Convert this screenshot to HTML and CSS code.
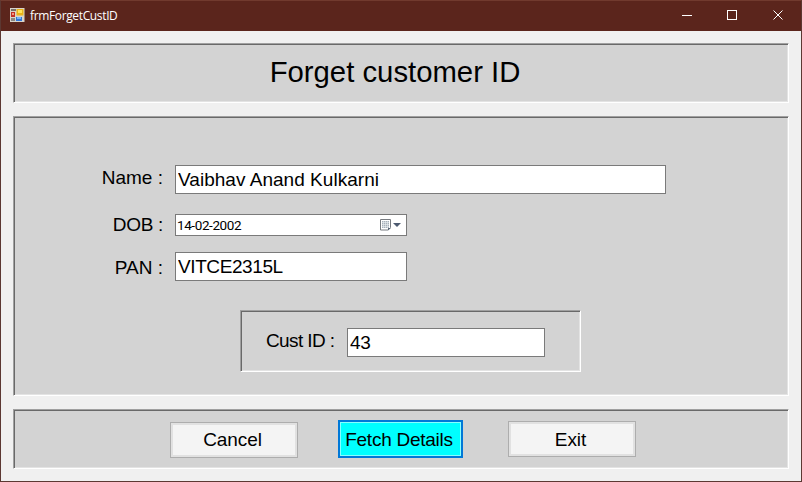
FILE: index.html
```html
<!DOCTYPE html>
<html lang="en">
<head>
<meta charset="utf-8">
<title>frmForgetCustID</title>
<link rel="stylesheet" href="styles.css">
</head>
<body>
<div class="window">
  <header class="titlebar">
    <svg class="app-icon" width="15" height="14" viewBox="0 0 15 14">
      <rect width="14.500" height="14" fill="#d8d4cc"/>
      <rect x="1" y="1" width="5" height="2" fill="#77706a"/>
      <rect x="1" y="4" width="4" height="5" fill="#c33024"/>
      <rect x="2" y="5" width="2" height="2" fill="#ee9a84"/>
      <rect x="1" y="10" width="4" height="3" fill="#8a8782"/>
      <rect x="6.500" y="1" width="7" height="6.500" fill="#eab318"/>
      <rect x="8" y="2" width="4" height="3" fill="#ffe45c"/>
      <rect x="6" y="9" width="6" height="4" fill="#2f76d8"/>
      <rect x="7" y="9" width="4" height="2" fill="#79b4f4"/>
    </svg>
    <span class="caption">frmForgetCustID</span>
    <svg class="controls" width="138" height="30" viewBox="0 0 138 30" fill="none" stroke="#fff">
      <path d="M19 14.500h10"/>
      <rect x="64.500" y="9.500" width="9" height="9"/>
      <path d="M110.500 9.500l9 9M119.500 9.500l-9 9"/>
    </svg>
  </header>
  <main class="client">
    <section class="panel heading"><h1>Forget customer ID</h1></section>
    <section class="panel details">
      <div class="row name"><label for="name">Name :</label><input id="name" value="Vaibhav Anand Kulkarni"></div>
      <div class="row dob"><span class="label">DOB :</span>
        <div class="date"><span>14-02-2002</span>
          <svg width="22" height="14" viewBox="0 0 22 14">
            <path d="M.5 1.500h10v8l-2.500 2.500H.5z" fill="#fff" stroke="#777b80"/>
            <path d="M2 3h7v7H2z" fill="#a8b1bb"/>
            <path d="M2 4.500h7M2 6.500h7M2 8.500h7M3.500 3v7M5.500 3v7M7.500 3v7" stroke="#edf1f4" stroke-width=".6"/>
            <path d="M8 12.500V10h3z" fill="#596675"/>
            <path d="M13 5h8l-4 4z" fill="#4c5a70"/>
          </svg>
        </div>
      </div>
      <div class="row pan"><label for="pan">PAN :</label><input id="pan" value="VITCE2315L"></div>
      <div class="panel customer"><label for="cust">Cust ID :</label><input id="cust" value="43"></div>
    </section>
    <section class="panel actions">
      <button class="cancel">Cancel</button>
      <button class="fetch">Fetch Details</button>
      <button class="exit">Exit</button>
    </section>
  </main>
</div>
</body>
</html>
```
FILE: styles.css
```css
* { box-sizing: border-box; }
body { margin: 0; font-family: "Liberation Sans", Arial, sans-serif; color: #000; }
.window { width: 802px; height: 482px; display: flex; flex-direction: column; background: #f0f0f0; border: 1px solid #5c3832; border-top-color: #713a2e; }
.titlebar { height: 30px; display: flex; align-items: center; background: #5b251c; color: #fff; padding-left: 9px; }
.app-icon { position: relative; top: -1px; }
.caption { margin: -1px 0 0 5px; font: 12px "Open Sans", sans-serif; letter-spacing: -.36px; }
.controls { margin-left: auto; }
.client { padding: 12px; display: flex; flex-direction: column; }
.panel { border: 1px solid; border-color: #a0a0a0 #fff #fff #a0a0a0; box-shadow: inset 1px 1px #696969, inset -1px -1px #e3e3e3; background: #d3d3d3; }
.heading { height: 60px; width: 776px; display: flex; justify-content: center; padding: 11px 12px 0 0; margin-bottom: 13px; }
h1 { margin: 0; font-size: 29.300px; line-height: 34px; font-weight: 400; white-space: nowrap; }
.details { width: 776px; height: 280px; padding-top: 48px; margin-bottom: 13px; }
.row { display: flex; align-items: flex-start; }
.row > label, .row > .label { width: 149px; margin-right: 12px; text-align: right; font-size: 19px; line-height: 22px; padding-top: 2px; }
input { font: 19px "Liberation Sans", Arial, sans-serif; color: #000; height: 29px; padding: 0 2px; border: 1px solid #7a7a7a; border-radius: 0; background: #fff; outline: 0; }
.name { height: 49px; }
.name input { width: 491px; letter-spacing: .03px; }
.dob { height: 38px; }
.row.dob > .label { padding-top: 0; letter-spacing: -.3px; }
.date { display: flex; justify-content: space-between; align-items: center; width: 232px; height: 22px; padding: 0 4px 0 1px; background: #fff; border: 1px solid #7a7a7a; font: 13.500px Roboto, sans-serif; }
.date span { letter-spacing: -.4px; }
.row.pan > label { padding-top: 5px; }
.pan { height: 58px; }
.pan input { width: 232px; letter-spacing: -.4px; }
.customer { width: 341px; height: 62px; margin-left: 226px; display: flex; padding: 17px 0 0 25px; }
.customer label { width: 81px; font-size: 19px; line-height: 25px; letter-spacing: -.6px; white-space: nowrap; }
.customer input { width: 198px; letter-spacing: -.3px; }
.actions { width: 776px; height: 60px; display: flex; padding: 12px 0 0 156px; }
button { width: 128px; height: 36px; padding: 0 3px 0 0; border: 1px solid #adadad; border-radius: 0; box-shadow: inset 0 0 0 2px #e1e1e1; background: #f4f4f4; color: #000; font: 19px "Liberation Sans", Arial, sans-serif; letter-spacing: -.1px; }
.fetch { width: 125px; height: 38px; margin: -2px 45px 0 40px; background: #0ff; border: 2px solid #0078d7; box-shadow: inset 0 0 0 1px #8ff; white-space: nowrap; letter-spacing: -.25px; padding: 1px 3px 0 0; }
.exit { margin-top: -1px; padding-top: 1px; }
```
